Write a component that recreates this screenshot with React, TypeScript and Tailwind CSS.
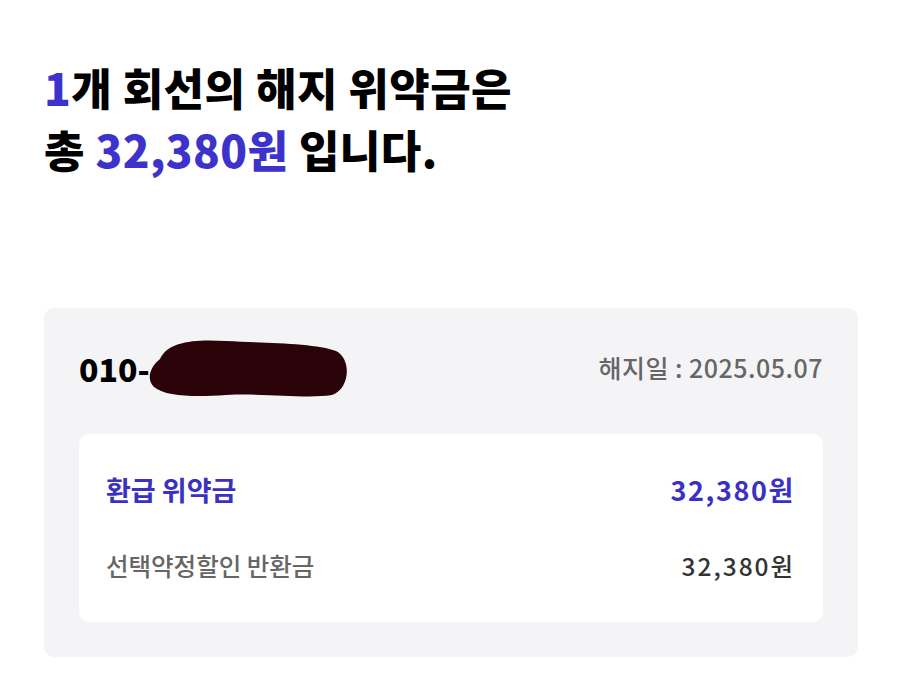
export default function App() {
  const font = { fontFamily: '"Noto Sans CJK KR", "Noto Sans", sans-serif' };
  return (
    <div className="w-[900px] h-[688px] bg-white overflow-hidden" style={font}>
      <div className="px-[44px] pt-[56px]">
        <h1 className="text-[44px] leading-[62px] font-black tracking-[0.01em] text-black">
          <span className="text-[#3d33cc]">1</span>개 회선의 해지 위약금은
          <br />총 <span className="text-[#3d33cc]">32,380원</span> 입니다.
        </h1>
      </div>

      <div className="ml-[44px] mr-[42px] mt-[128px] rounded-[10px] bg-[#f4f4f7] px-[35px] pt-[30px] pb-[35px]">
        <div className="flex items-center justify-between h-[60px]">
          <div className="flex items-center">
            <span className="text-[32px] font-black tracking-[0em] text-black">010-</span>
            <svg width="204" height="62" viewBox="0 0 204 62" className="-ml-[4px]">
              <path
                d="M14 22 C22 4 50 2 80 4 C120 6 170 6 190 14 C206 22 204 52 186 58 C160 62 120 56 80 58 C50 60 20 60 8 50 C0 42 4 30 14 22 Z"
                fill="#2a0309"
              />
            </svg>
          </div>
          <span className="text-[25px] font-medium text-[#666666] tracking-[0.02em]">해지일 : 2025.05.07</span>
        </div>

        <div className="mt-[36px] rounded-[10px] bg-white pl-[27px] pr-[28px] pt-[36px] pb-[38px] flex flex-col gap-[37px]">
          <div className="flex items-center justify-between">
            <span className="text-[27px] font-bold text-[#3a30c4] tracking-[0em]">환급 위약금</span>
            <span className="text-[27px] font-bold text-[#3a30c4] tracking-[0.06em]">32,380원</span>
          </div>
          <div className="flex items-center justify-between">
            <span className="text-[24.5px] font-medium text-[#666666] tracking-[0em]">선택약정할인 반환금</span>
            <span className="text-[24.5px] font-medium text-[#333333] tracking-[0.08em]">32,380원</span>
          </div>
        </div>
      </div>
    </div>
  );
}
